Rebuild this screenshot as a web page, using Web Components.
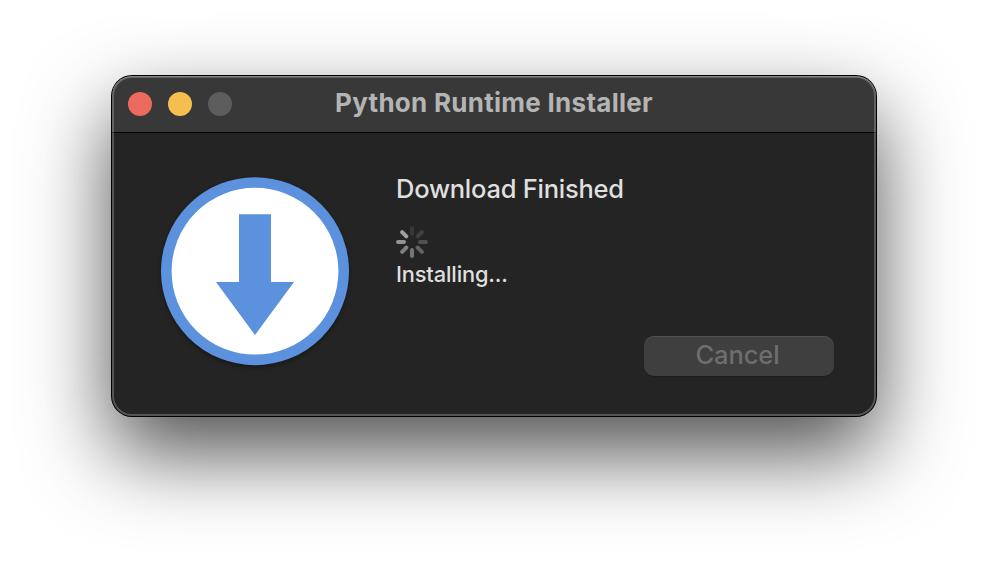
<!DOCTYPE html>
<html lang="en">
<head>
<meta charset="utf-8">
<title>Python Runtime Installer</title>
<style>
body { margin: 0; width: 988px; height: 564px; box-sizing: border-box; padding: 76px 112px 148px; overflow: hidden; background: #fff; font-family: Inter, "Liberation Sans", sans-serif; }
</style>
</head>
<body>
<installer-window>
  <title-bar slot="title">Python Runtime Installer</title-bar>
  <download-icon slot="icon"></download-icon>
  <install-status slot="status"><span slot="heading">Download Finished</span><span slot="detail">Installing...</span></install-status>
  <push-button slot="action">Cancel</push-button>
</installer-window>
<script>
const define = (name, html) => customElements.define(name, class extends HTMLElement {
  constructor() { super(); this.attachShadow({ mode: 'open' }).innerHTML = html; }
});

define('installer-window', `
<style>
:host { display: grid; grid-template-rows: 56px 1fr; position: relative; height: 340px; border-radius: 20px; background: #242424;
  box-shadow: 0 0 0 1px #000, 0 36px 84px rgba(0,0,0,.7); }
:host::after { content: ""; position: absolute; inset: 0; border-radius: 20px; pointer-events: none;
  box-shadow: inset 0 0 0 2px rgba(255,255,255,.22), inset 0 1px 0 rgba(255,255,255,.22); }
main { display: grid; grid-template-columns: 188px 1fr; column-gap: 47px; grid-template-rows: 159px 40px; row-gap: 0; padding: 44px 42px 0 49px; border-top: 1px solid #000; box-sizing: border-box; }
.icon { grid-row: 1 / 3; }
.action { display: flex; justify-content: flex-end; }
</style>
<slot name="title"></slot>
<main><div class="icon"><slot name="icon"></slot></div><slot name="status"></slot><div class="action"><slot name="action"></slot></div></main>`);

define('title-bar', `
<style>
:host { display: grid; grid-template-columns: 104px 1fr 104px; padding: 0 16px; background: #383838; border-radius: 20px 20px 0 0; color: #b4b4b4; font-size: 26px; font-weight: 700; align-items: center; }
.lights { display: flex; gap: 16px; }
i { width: 24px; height: 24px; border-radius: 50%; background: var(--c); }
.title { text-align: center; white-space: nowrap; line-height: 32px; padding-bottom: 2px; letter-spacing: .27px; }
</style>
<div class="lights"><i style="--c:#ed6a5e"></i><i style="--c:#f5bf4f"></i><i style="--c:#5d5d5d"></i></div>
<div class="title"><slot></slot></div>`);

define('download-icon', `
<style>
:host { display: block; width: 188px; height: 188px; }
svg { display: block; overflow: visible; filter: drop-shadow(0 2px 2px rgba(0,0,0,.35)); }
</style>
<svg width="188" height="188" viewBox="0 0 188 188">
<circle cx="94" cy="94.2" r="88.7" fill="#fff" stroke="#5b91dd" stroke-width="10.6"/>
<path d="M78 37.3h32V105h23L94 158 55 105H78z" fill="#5b91dd"/>
</svg>`);

define('install-status', `
<style>
:host { display: flex; flex-direction: column; align-items: flex-start; color: #dfdfdf; white-space: nowrap; }
.heading { font-size: 25.5px; font-weight: 450; line-height: 32px; margin-top: -4px; letter-spacing: -.25px; }
.detail { font-size: 21.8px; font-weight: 450; line-height: 28px; letter-spacing: -.15px; margin-top: 2px; }
busy-spinner { margin-top: 21px; }
</style>
<div class="heading"><slot name="heading"></slot></div>
<busy-spinner></busy-spinner>
<div class="detail"><slot name="detail"></slot></div>`);

define('busy-spinner', `
<style>:host { display: block; width: 32px; height: 32px; } svg { display: block; }</style>
<svg width="32" height="32" viewBox="-16 -16 32 32" stroke-width="4" stroke-linecap="round">
${['#383838', '#404040', '#505050', '#646464', '#757575', '#808080', '#929292', '#9f9f9f'].map((c, i) => `<path d="M0-8v-6" stroke="${c}" transform="rotate(${i * 45})"/>`).join('')}
</svg>`);

define('push-button', `
<style>
:host { display: block; width: 190px; height: 40px; }
button { display: block; width: 100%; height: 40px; padding: 0 3px 3px 0; border: 0; border-radius: 10px; background: #3f3f3f; box-shadow: inset 0 1px 0 #505050, 0 1px 1px rgba(0,0,0,.2); color: #6e6e6e; font: 450 25.5px/37px Inter, sans-serif; letter-spacing: -.1px; }
</style>
<button disabled><slot></slot></button>`);
</script>
</body>
</html>
